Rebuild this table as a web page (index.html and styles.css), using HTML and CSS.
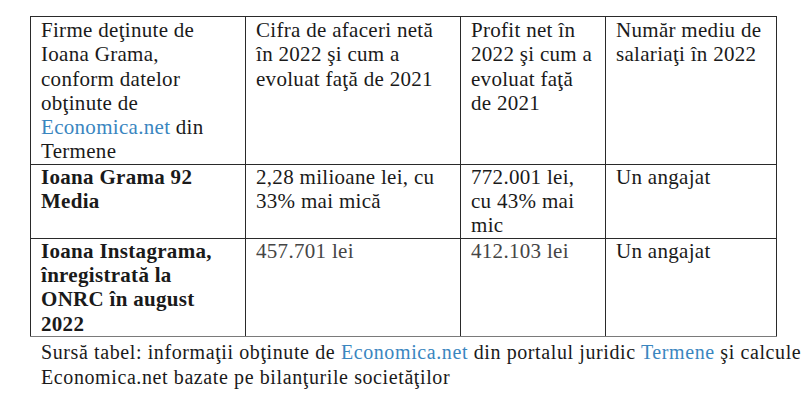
FILE: index.html
```html
<!DOCTYPE html>
<html lang="ro">
<head>
<meta charset="utf-8">
<link rel="stylesheet" href="styles.css">
</head>
<body>
<div class="page">
  <table class="data">
    <colgroup>
      <col class="c1"><col class="c2"><col class="c3"><col class="c4">
    </colgroup>
    <tr class="head">
      <td>Firme deţinute de<br>Ioana Grama,<br>conform datelor<br>obţinute de<br><span class="link">Economica.net</span> din<br>Termene</td>
      <td>Cifra de afaceri netă<br>în 2022 şi cum a<br>evoluat faţă de 2021</td>
      <td class="gray-left">Profit net în<br>2022 şi cum a<br>evoluat faţă<br>de 2021</td>
      <td>Număr mediu de<br>salariaţi în 2022</td>
    </tr>
    <tr>
      <td class="name">Ioana Grama 92<br>Media</td>
      <td>2,28 milioane lei, cu<br>33% mai mică</td>
      <td>772.001 lei,<br>cu 43% mai<br>mic</td>
      <td>Un angajat</td>
    </tr>
    <tr class="last">
      <td class="name">Ioana Instagrama,<br>înregistrată la<br>ONRC în august<br>2022</td>
      <td class="muted">457.701 lei</td>
      <td class="muted">412.103 lei</td>
      <td>Un angajat</td>
    </tr>
  </table>
  <p class="source">Sursă tabel: informaţii obţinute de <span class="link">Economica.net</span> din portalul juridic <span class="link">Termene</span> şi calcule<br>Economica.net bazate pe bilanţurile societăţilor</p>
</div>
</body>
</html>
```

FILE: styles.css
```css
html, body {
  margin: 0;
  background: #ffffff;
}

.page {
  padding: 16px 0 0 30px;
  font-family: "Liberation Serif", "Times New Roman", serif;
  color: #1a1a1a;
}

.data {
  border-collapse: collapse;
  table-layout: fixed;
  width: 746px;
  font-size: 21px;
  letter-spacing: 0.3px;
}

.c1 { width: 215px; }
.c2 { width: 215px; }
.c3 { width: 145px; }
.c4 { width: 171px; }

.data td {
  border: 1px solid #2a2a2a;
  padding: 0 10px;
  vertical-align: top;
  line-height: 24.3px;
  white-space: nowrap;
}

.head td {
  padding-top: 1px;
}

.data td.gray-left {
  border-left-color: #8a8a8a;
}

.last td {
  border-bottom-color: #7a7a7a;
}

.name {
  font-weight: bold;
}

.muted {
  color: #454545;
}

.link {
  color: #3a86bf;
}

.source {
  margin: 0;
  padding: 3px 0 0 11px;
  font-size: 20px;
  letter-spacing: 0.6px;
  line-height: 24.7px;
  white-space: nowrap;
}
```
